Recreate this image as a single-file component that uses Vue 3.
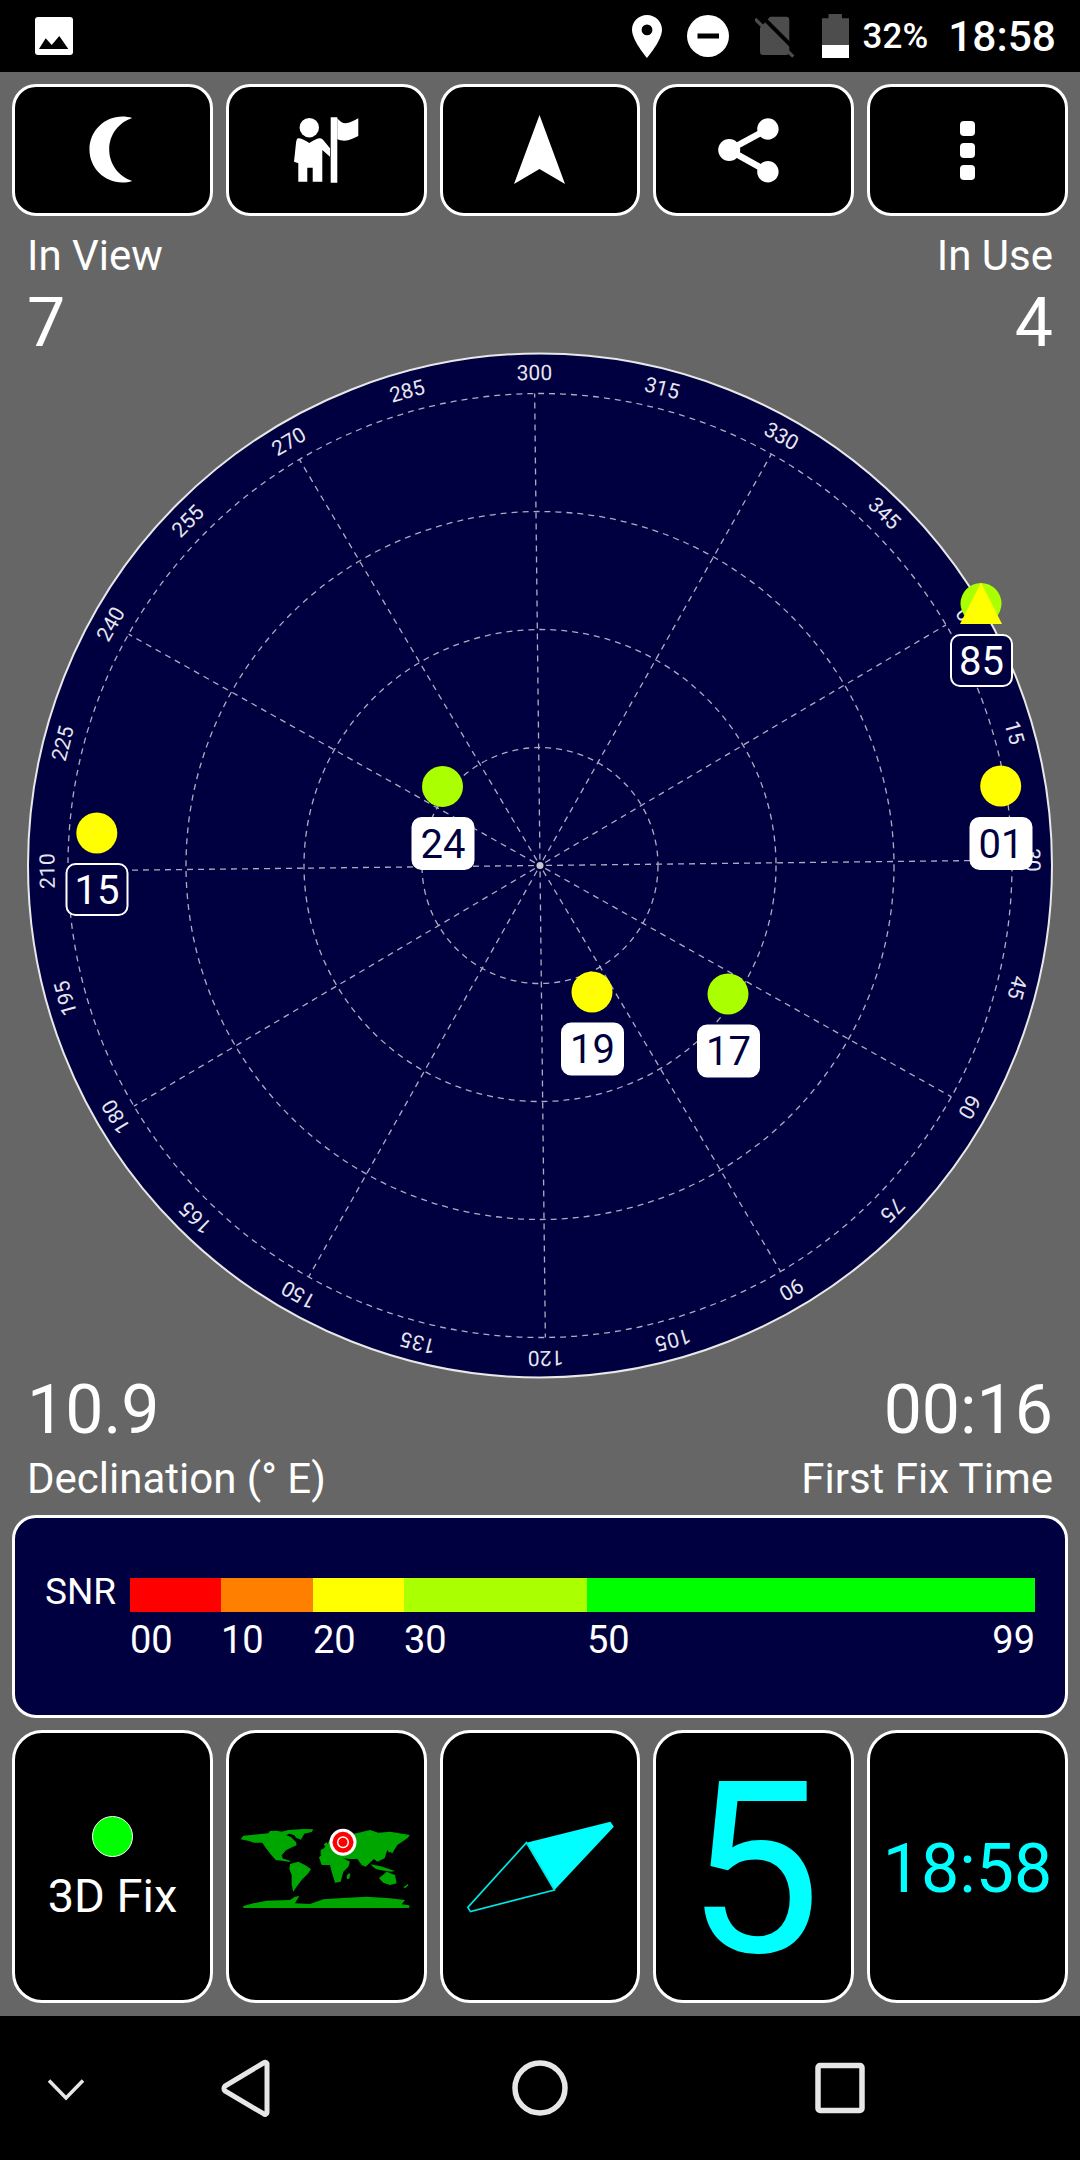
<script setup>
const rot = -0.65
const cx = 540
const cy = 865.5
const rings = [118, 236, 354, 472]
const spokes = [0, 30, 60, 90, 120, 150, 180, 210, 240, 270, 300, 330]
const labels = []
for (let az = 0; az < 360; az += 15) {
  labels.push({ az, a: ((az - 300 + 360) % 360) + rot })
}
const pt = (deg, r) => {
  const t = ((deg - 300 + rot) * Math.PI) / 180
  return { x: cx + r * Math.sin(t), y: cy - r * Math.cos(t) }
}
const spokeLines = spokes.map((az) => ({ az, a: pt(az, 6), b: pt(az, 472) }))
const sats = [
  { id: '24', x: 442.5, y: 786.4, c: '#aaff00', lx: 411.5, ly: 817, used: true },
  { id: '15', x: 96.8, y: 833, c: '#ffff00', lx: 65.5, ly: 863, used: false },
  { id: '19', x: 592, y: 992, c: '#ffff00', lx: 561, ly: 1022.5, used: true },
  { id: '17', x: 728, y: 994, c: '#aaff00', lx: 697, ly: 1024.5, used: true },
  { id: '01', x: 1000.7, y: 786, c: '#ffff00', lx: 969.5, ly: 817, used: true },
  { id: '85', x: 981, y: 603.5, c: '#aaff00', lx: 950, ly: 634, used: false, tri: true }
]
const segs = [
  { c: '#ff0000', f: 91, t: '00' },
  { c: '#ff8000', f: 92, t: '10' },
  { c: '#ffff00', f: 91, t: '20' },
  { c: '#aaff00', f: 183, t: '30' },
  { c: '#00ff00', f: 448, t: '50' }
]
</script>

<template>
  <div class="screen">
    <header class="status">
      <svg viewBox="0 0 38 38" width="38" height="38">
        <path d="M3 0h32a3 3 0 0 1 3 3v32a3 3 0 0 1-3 3H3a3 3 0 0 1-3-3V3a3 3 0 0 1 3-3z" fill="#fff" />
        <path d="M4 32 10.700 21.300 16.700 28 24.300 19 33.300 32z" fill="#000" />
      </svg>
      <div class="st-right">
        <svg viewBox="0 0 30 43" width="30" height="43">
          <path fill-rule="evenodd" d="M15 0C6.700 0 0 6.600 0 14.800 0 25.500 15 43 15 43s15-17.500 15-28.200C30 6.600 23.300 0 15 0zm0 20.300a5.400 5.400 0 1 1 0-10.800 5.400 5.400 0 0 1 0 10.800z" fill="#fff" />
        </svg>
        <svg class="ml-dnd" viewBox="0 0 42 42" width="42" height="42">
          <circle cx="21" cy="21" r="21" fill="#fff" />
          <rect x="10.500" y="18.500" width="21.500" height="5" fill="#000" />
        </svg>
        <svg class="ml-sim" viewBox="755 15 40 43" width="40" height="43">
          <path d="M770 16.700h16a3.300 3.300 0 0 1 3.300 3.300v31.700a3.300 3.300 0 0 1-3.300 3.300h-23a3 3 0 0 1-3-3V28z" fill="#4d4d4d" />
          <path d="M760 14.500 797 51.500" stroke="#000" stroke-width="4" />
          <path d="M755 19 793.300 56.700" stroke="#4d4d4d" stroke-width="3.200" />
        </svg>
        <svg class="ml-bat" viewBox="0 0 27 44" width="27" height="44">
          <path d="M6.500 0h13.400v4.300H27V44H0V4.300h6.500z" fill="#4d4d4d" />
          <rect x="0" y="31" width="27" height="13" fill="#fff" />
        </svg>
        <span class="st-pct">32%</span>
        <span class="st-time">18:58</span>
      </div>
    </header>

    <main class="body">
      <section class="btn-row top-row">
        <div class="btn">
          <svg viewBox="0 0 24 24" width="79" height="79" class="moon">
            <path d="M15 2c1.050 0 2.050.16 3 .46C13.940 3.730 11 7.520 11 12c0 4.480 2.940 8.270 7 9.540-.95.3-1.950.46-3 .46C9.480 22 5 17.520 5 12S9.480 2 15 2z" fill="#fff" />
          </svg>
        </div>
        <div class="btn">
          <svg viewBox="266 100 120 100" width="120" height="100">
            <circle cx="309.300" cy="127.700" r="9.700" fill="#fff" />
            <path d="M294 161.700 296 143q.5-4.700 2.300-4.700 4 0 11 4.700 7-4.700 10.700-4.700 2 0 3 1.500l7 8.500v8.400l-7.700-6.700v31.700h-9.600v-14h-5.400v14h-9v-18.400z" fill="#fff" />
            <path d="M330.700 117.300h6.600v65.400h-6.600z" fill="#fff" />
            <path d="M337.300 118.300q4 5 8 5c4 0 9-3 13-5v17.700c-4 2-9 4.700-14 4.700q-4 0-7-1.400z" fill="#fff" />
          </svg>
        </div>
        <div class="btn">
          <svg viewBox="0 0 52 70" width="52" height="70">
            <path d="M25.500 0 51 69 25.500 54 0 69z" fill="#fff" />
          </svg>
        </div>
        <div class="btn">
          <svg viewBox="703.800 105 100 90" width="100" height="90">
            <path d="M767.700 129 729 150 767.700 171.700" fill="none" stroke="#fff" stroke-width="6.500" />
            <circle cx="767.700" cy="129" r="10.700" fill="#fff" />
            <circle cx="729" cy="150" r="11" fill="#fff" />
            <circle cx="767.700" cy="171.700" r="10.700" fill="#fff" />
          </svg>
        </div>
        <div class="btn dots">
          <i /><i /><i />
        </div>
      </section>

      <section class="readout head">
        <div><div class="lbl">In View</div><div class="num">7</div></div>
        <div class="right"><div class="lbl">In Use</div><div class="num">4</div></div>
      </section>

      <svg class="polar" viewBox="0 350 1080 1030" width="1080" height="1030">
        <circle :cx="cx" :cy="cy" r="512" fill="#000040" stroke="#e8e8e8" stroke-width="2" />
        <circle v-for="r in rings" :key="r" :cx="cx" :cy="cy" :r="r" class="grid" />
        <line
          v-for="s in spokeLines"
          :key="s.az"
          :x1="s.a.x"
          :y1="s.a.y"
          :x2="s.b.x"
          :y2="s.b.y"
          class="grid"
        />
        <circle :cx="cx" :cy="cy" r="3.500" fill="#c8c8c8" />
        <text
          v-for="l in labels"
          :key="l.az"
          class="deg"
          :transform="`rotate(${l.a} ${cx} ${cy})`"
          :x="cx"
          :y="cy - 485.500"
        >{{ l.az }}</text>
        <template v-for="s in sats" :key="s.id">
          <circle :cx="s.x" :cy="s.y" r="20.500" :fill="s.c" />
          <polygon
            v-if="s.tri"
            :points="`${s.x},${s.y - 21} ${s.x - 21},${s.y + 20.500} ${s.x + 21},${s.y + 20.500}`"
            fill="#ffff00"
          />
          <rect
            :x="s.lx + 1"
            :y="s.ly + 1"
            width="61"
            height="51"
            rx="9"
            :fill="s.used ? '#ffffff' : '#000040'"
            stroke="#ffffff"
            stroke-width="2"
          />
          <text
            class="sat-id"
            :x="s.lx + 31.500"
            :y="s.ly + 40.500"
            :fill="s.used ? '#000040' : '#ffffff'"
          >{{ s.id }}</text>
        </template>
      </svg>

      <section class="readout foot">
        <div><div class="num">10.9</div><div class="lbl">Declination (° E)</div></div>
        <div class="right"><div class="num">00:16</div><div class="lbl">First Fix Time</div></div>
      </section>

      <section class="snr">
        <div class="snr-title">SNR</div>
        <div class="snr-main">
          <div class="snr-bar">
            <div v-for="s in segs" :key="s.t" class="seg" :style="{ background: s.c, flexGrow: s.f }" />
          </div>
          <div class="snr-ticks">
            <span v-for="s in segs" :key="s.t" class="tick" :style="{ flexGrow: s.f }">{{ s.t }}</span>
            <span class="tick-end">99</span>
          </div>
        </div>
      </section>

      <section class="btn-row bottom-row">
        <div class="btn fix">
          <span class="fix-dot" />
          <span class="fix-txt">3D Fix</span>
        </div>
        <div class="btn map-btn">
          <svg viewBox="0 0 201 273" width="201" height="273">
            <g transform="translate(-16 40) scale(.3333)" fill="#00a600">
              <path d="M100 197l25-2 27-3 23-2 5-7 20-1 15 3 20-5 45-3 30 1-5 8-22 5-10 18-15-6-5-7-15-5-10 5 15 5 15 15 2 10-17 7-15 8-13 15 4 10 18 5 5 5-20-3-25-3-15-17-15-20-10-15-25 0-15-5-25-5z" />
              <path d="M240 282l25-7 20 10 18 12-8 13-20 20-15 20-10 15-5-20 0-30-7-18z" />
              <path d="M327 262l18-17 30 5 25 15 20 10-5 15-15 15-8 30-17 3-10-33-5-20-25 0z" />
              <path d="M410 318l6-8 5 2-3 14-7 1z" />
              <path d="M332 240l10-5 8-10 15-25 30-5 45-5 40-10 25 8 35-3 60 10-8 10-30 20-15 25-15-10-8 25-22 10-10-8-25 23-12-5-13-18-25 0-25-4-15-10-30 2-15 0z" />
              <path d="M342 222l8-5 3 8-8 5z" />
              <path d="M533 240l8-8 4 5-8 12z" />
              <path d="M482 283l30 6 25 8 18 6-12 2-30-4-15-4-8-6z" />
              <path d="M507 325l23-20 25 10 5 25-20 5-20-7z" />
              <path d="M580 352l14-10 1 4-10 9z" />
              <path d="M100 408l30-8 40-8 70-2 15-10 13-2-13 22 45 2 40-14 60-4 70-4 70 5 45 5-10 13 23 3v8H100z" />
            </g>
            <circle cx="117" cy="112.300" r="13.500" fill="#fff" />
            <circle cx="117" cy="112.300" r="10.500" fill="#ff0000" />
            <circle cx="117" cy="112.300" r="6" fill="#fff" />
            <circle cx="117" cy="112.300" r="4.500" fill="#ff0000" />
          </svg>
        </div>
        <div class="btn map-btn">
          <svg viewBox="0 0 201 273" width="201" height="273">
            <g transform="translate(-229.500 40) scale(.3333)">
              <path d="M948 218 1200 155 1210 170 1032 360z" fill="#00ffff" />
              <path d="M948 218 772 412 780 425 1032 360z" fill="none" stroke="#00e6e6" stroke-width="5" />
            </g>
          </svg>
        </div>
        <div class="btn big-five">5</div>
        <div class="btn time">18:58</div>
      </section>
    </main>

    <footer class="nav">
      <svg viewBox="0 0 1080 144" width="1080" height="144">
        <path d="M49 64.500 66 82 83 64.500" fill="none" stroke="#e6e6e6" stroke-width="3.500" />
        <path d="M267 47.500v49a2 2 0 0 1-3.500 1.200L225 75a3.500 3.500 0 0 1 0-5l38.500-23a2 2 0 0 1 3.500.5z" fill="none" stroke="#e6e6e6" stroke-width="5" />
        <circle cx="540" cy="72" r="25" fill="none" stroke="#e6e6e6" stroke-width="5.500" />
        <rect x="818" y="49.500" width="44" height="45" rx="2" fill="none" stroke="#e6e6e6" stroke-width="5.500" />
      </svg>
    </footer>
  </div>
</template>

<style scoped>
.screen {
  width: 1080px;
  height: 2160px;
  background: #666666;
  display: flex;
  flex-direction: column;
  font-family: Roboto, "Liberation Sans", sans-serif;
  color: #fff;
  overflow: hidden;
}
.status {
  height: 72px;
  background: #000;
  display: flex;
  align-items: center;
  justify-content: space-between;
  padding: 0 24px 0 35px;
  flex: none;
}
.st-right {
  display: flex;
  align-items: center;
}
.ml-dnd { margin-left: 25px; }
.ml-sim { margin-left: 26px; }
.ml-bat { margin-left: 27px; }
.st-pct { font-size: 35px; font-weight: 500; margin-left: 14px; }
.st-time { font-size: 42.500px; font-weight: 500; margin-left: 20px; }
.body {
  flex: 1;
  display: flex;
  flex-direction: column;
  padding: 12px 12px 0;
  min-height: 0;
}
.btn-row {
  display: grid;
  grid-template-columns: repeat(5, 1fr);
  column-gap: 12.800px;
  flex: none;
}
.top-row { height: 132px; }
.bottom-row { height: 273px; margin-top: 12px; }
.btn {
  background: #000;
  border: 3px solid #fff;
  border-radius: 24px;
  display: flex;
  align-items: center;
  justify-content: center;
  box-sizing: border-box;
  overflow: hidden;
}
.bottom-row .btn { border-radius: 30px; }
.moon { margin-top: -2px; }
.dots {
  flex-direction: column;
  gap: 7px;
}
.dots i {
  display: block;
  width: 15px;
  height: 15px;
  background: #fff;
  border-radius: 4px;
}
.readout {
  display: flex;
  justify-content: space-between;
  padding: 0 15px;
  flex: none;
}
.right { text-align: right; }
.lbl { font-size: 42px; line-height: 48px; white-space: nowrap; }
.num { font-size: 68px; line-height: 76px; white-space: nowrap; }
.head { margin-top: 16px; height: 118px; }
.head .num { margin-top: 5px; }
.polar {
  display: block;
  flex: none;
  margin: 0 -12px -8px;
}
.grid {
  fill: none;
  stroke: #acacc0;
  stroke-width: 1.300;
  stroke-dasharray: 6 5;
}
.deg {
  fill: #e6e6ee;
  font-size: 21px;
  text-anchor: middle;
  font-family: Roboto, "Liberation Sans", sans-serif;
}
.sat-id {
  font-size: 40px;
  text-anchor: middle;
  font-family: Roboto, "Liberation Sans", sans-serif;
}
.foot { height: 131px; }
.foot .lbl { margin-top: 7px; }
.snr {
  flex: none;
  height: 203px;
  margin-top: 12px;
  box-sizing: border-box;
  background: #000040;
  border: 3px solid #fff;
  border-radius: 24px;
  display: flex;
  padding: 60px 30px 0 30px;
}
.snr-title { font-size: 37px; line-height: 34px; width: 85px; flex: none; margin-top: -3px; }
.snr-main { flex: 1; }
.snr-bar { display: flex; height: 34px; }
.seg { flex-basis: 0; }
.snr-ticks { display: flex; margin-top: 7px; font-size: 38px; line-height: 42px; position: relative; }
.tick { flex-basis: 0; }
.tick-end { position: absolute; right: 0; top: 0; }
.fix { flex-direction: column; }
.fix-dot {
  width: 41px;
  height: 41px;
  border-radius: 50%;
  background: #00ff00;
  border: 1.500px solid #fff;
  box-sizing: border-box;
  margin-top: 5px;
}
.fix-txt { font-size: 47px; line-height: 54px; margin-top: 12px; }
.map-btn svg { flex: none; margin: -3px; }
.big-five { font-size: 240px; line-height: 273px; color: #00ffff; padding-top: 8px; }
.time { font-size: 68px; color: #00ffff; padding-top: 4px; }
.nav {
  height: 144px;
  background: #000;
  flex: none;
}
.nav svg { display: block; }
</style>

<style>
html, body { margin: 0; padding: 0; background: #666; }
</style>
